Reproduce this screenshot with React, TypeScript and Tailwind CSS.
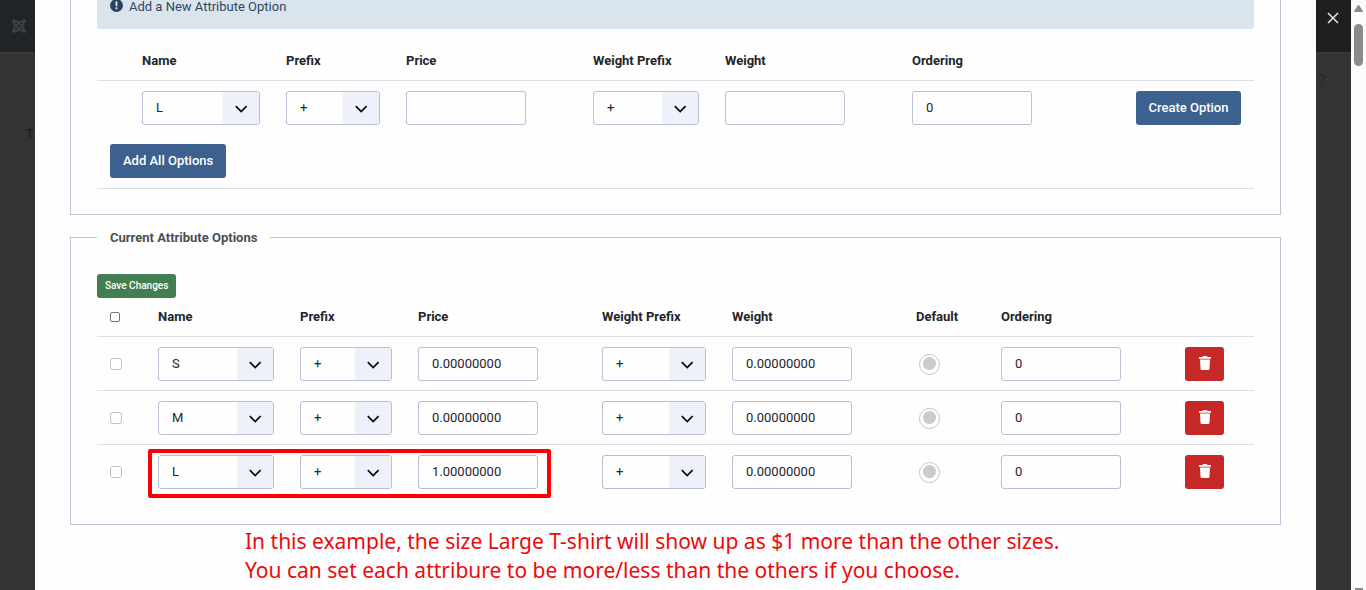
import { FaJoomla } from 'react-icons/fa';

const cell = 'px-[13px] pt-[10px] pb-[9px] text-left align-middle';
const headCell = 'px-[13px] py-[9px] text-left align-middle';
const fieldClass =
  'block h-[34px] w-[120px] rounded-[3px] border border-[#b9bfd3] bg-[#fefeff] px-[13px] pb-[2px] text-[13px] leading-5 text-[#22262a] outline-none focus:border-[#3d618f]';

function Select({ label, value, options }: { label: string; value: string; options: string[] }) {
  return (
    <div className="grid h-[34px] w-full overflow-hidden rounded-[3px] border border-[#b9bfd3] bg-[#fefeff]">
      <span className="pointer-events-none z-10 col-start-1 row-start-1 flex w-9 items-center justify-center justify-self-end bg-[#eef1fa]">
        <svg width="14" height="10" viewBox="0 0 14 10" fill="none" stroke="#0c0d10" strokeWidth="1.8" className="mt-px">
          <path d="M1.800 2.200 L7.200 7.600 L12.600 2.200" />
        </svg>
      </span>
      <select
        aria-label={label}
        defaultValue={value}
        className="col-start-1 row-start-1 w-full appearance-none bg-transparent px-[13px] text-[13px] leading-5 text-[#22262a] outline-none"
      >
        {options.map((o) => (
          <option key={o}>{o}</option>
        ))}
      </select>
    </div>
  );
}

const sizes = ['S', 'M', 'L'];
const signs = ['+', '-', '='];
const rows = [
  { size: 'S', price: '0.00000000' },
  { size: 'M', price: '0.00000000' },
  { size: 'L', price: '1.00000000' },
];

function NewOptionTable() {
  return (
    <table className="mt-3 w-full table-fixed border-collapse">
      <colgroup>
        <col className="w-[32px]" />
        <col className="w-[144px]" />
        <col className="w-[120px]" />
        <col className="w-[187px]" />
        <col className="w-[132px]" />
        <col className="w-[187px]" />
        <col className="w-[224px]" />
        <col className="w-[131px]" />
      </colgroup>
      <thead>
        <tr className="border-b border-[#dcdfe4]">
          <th className={cell}></th>
          {['Name', 'Prefix', 'Price', 'Weight Prefix', 'Weight', 'Ordering'].map((h) => (
            <th key={h} className={cell}>{h}</th>
          ))}
          <th className={cell}></th>
        </tr>
      </thead>
      <tbody>
        <tr>
          <td></td>
          <td className={cell}><Select label="Name" value="L" options={sizes} /></td>
          <td className={cell}><Select label="Prefix" value="+" options={signs} /></td>
          <td className={cell}><input aria-label="Price" className={fieldClass} /></td>
          <td className={cell}><Select label="Weight Prefix" value="+" options={signs} /></td>
          <td className={cell}><input aria-label="Weight" className={fieldClass} /></td>
          <td className={cell}><input aria-label="Ordering" defaultValue="0" className={fieldClass} /></td>
          <td className={cell}>
            <button type="button" className="block h-[34px] w-full rounded-[3px] bg-[#3d618f] font-medium whitespace-nowrap text-white">
              Create Option
            </button>
          </td>
        </tr>
        <tr className="border-b border-[#dcdfe4]">
          <td colSpan={8} className="px-[13px] py-[10px]">
            <button type="button" className="block h-[34px] rounded-[3px] bg-[#3d618f] px-[13px] font-medium whitespace-nowrap text-white">
              Add All Options
            </button>
          </td>
        </tr>
      </tbody>
    </table>
  );
}

function CurrentOptionsTable() {
  return (
    <table className="w-full table-fixed border-collapse">
      <colgroup>
        <col className="w-[48px]" />
        <col className="w-[142px]" />
        <col className="w-[118px]" />
        <col className="w-[184px]" />
        <col className="w-[130px]" />
        <col className="w-[184px]" />
        <col className="w-[85px]" />
        <col className="w-[184px]" />
        <col className="w-[82px]" />
      </colgroup>
      <thead>
        <tr className="border-b border-[#dcdfe4]">
          <th className={headCell}>
            <input
              type="checkbox"
              aria-label="Select all"
              className="block size-[10px] appearance-none rounded-[2px] border border-[#767676] bg-white checked:bg-[#3d618f]"
            />
          </th>
          {['Name', 'Prefix', 'Price', 'Weight Prefix', 'Weight', 'Default', 'Ordering'].map((h) => (
            <th key={h} className={headCell}>{h}</th>
          ))}
          <th className={headCell}></th>
        </tr>
      </thead>
      <tbody>
        {rows.map((r) => (
          <tr key={r.size} className="border-b border-[#dcdfe4] last:border-b-0">
            <td className={cell}>
              <input
                type="checkbox"
                aria-label={`Select ${r.size}`}
                className="block size-3 appearance-none rounded-[3px] border border-[#b9bfd3] bg-white checked:bg-[#3d618f]"
              />
            </td>
            <td className={`${cell} relative`}>
              <Select label="Name" value={r.size} options={sizes} />
              {r.size === 'L' && (
                <span className="pointer-events-none absolute top-1 left-[3px] z-20 h-[49px] w-[403px] rounded-[2px] border-4 border-[#fb0007]" />
              )}
            </td>
            <td className={cell}><Select label="Prefix" value="+" options={signs} /></td>
            <td className={cell}><input aria-label="Price" defaultValue={r.price} className={fieldClass} /></td>
            <td className={cell}><Select label="Weight Prefix" value="+" options={signs} /></td>
            <td className={cell}><input aria-label="Weight" defaultValue="0.00000000" className={fieldClass} /></td>
            <td className={cell}>
              <input
                type="radio"
                name="default-option"
                aria-label={`Default ${r.size}`}
                className="ml-[3px] block size-[21px] appearance-none rounded-full border border-[#c4c4c4] bg-white bg-[radial-gradient(circle_at_50%_45%,#cbcbcb_6px,transparent_7px)]"
              />
            </td>
            <td className={cell}><input aria-label="Ordering" defaultValue="0" className={fieldClass} /></td>
            <td className={cell}>
              <button
                type="button"
                aria-label={`Delete ${r.size}`}
                className="flex h-[34px] w-[39px] items-center justify-center rounded-[3px] bg-[#c52827] pb-[2px] text-white"
              >
                <svg width="12" height="14" viewBox="0 0 12 14" fill="currentColor">
                  <path d="M0 1h3.600L4.200 0h3.600l.6 1H12v1.800H0z M1 3.600h10l-.5 9.200c0 .7-.5 1.200-1.200 1.200H2.700c-.7 0-1.200-.5-1.200-1.200z" />
                </svg>
              </button>
            </td>
          </tr>
        ))}
      </tbody>
    </table>
  );
}

export default function App() {
  return (
    <div className="flex min-h-screen overflow-hidden bg-[#fefefe] font-['Roboto',sans-serif] text-[13px] leading-5 text-[#22262a]">
      <aside className="flex w-[35px] shrink-0 flex-col bg-[#333333]">
        <div className="flex h-[53px] shrink-0 items-center border-b border-[#393a3c] bg-[#202327] pl-[11px]">
          <FaJoomla size={16} className="text-[#3e4142]" />
        </div>
        <span className="mt-[71px] pl-[26px] text-[#181a1c]">T</span>
      </aside>

      <main className="min-w-0 flex-1 px-[35px]">
        <fieldset className="border border-t-0 border-[#bfc3d6] px-[26px] pb-[25px]">
          <div className="flex h-[29px] items-start gap-[6px] rounded-b-[3px] bg-[#dae4ed] pl-[13px] leading-[14px] text-[#32465f]">
            <svg width="13" height="13" viewBox="0 0 13 13" className="-mt-px">
              <circle cx="6.500" cy="6.500" r="6.500" fill="#2b4264" />
              <path d="M5.500 2.500h2l-.3 4.800h-1.400z" fill="#eef3f8" />
              <circle cx="6.500" cy="9.300" r="1" fill="#eef3f8" />
            </svg>
            <span>Add a New Attribute Option</span>
          </div>
          <NewOptionTable />
        </fieldset>

        <fieldset className="mt-[13px] border border-[#bfc3d6] px-[26px] pt-[27px] pb-[26px]">
          <legend className="px-[13px] pt-px leading-[18px] font-bold text-[#495057]">Current Attribute Options</legend>
          <button type="button" className="block h-6 rounded-[3px] bg-[#437d52] px-2 text-[10px] font-medium whitespace-nowrap text-white">
            Save Changes
          </button>
          <CurrentOptionsTable />
        </fieldset>

        <p className="mt-[2px] pl-[175px] font-['Noto_Sans',sans-serif] text-[21px] leading-[29px] whitespace-nowrap text-[#ec0a0c]">
          In this example, the size Large T-shirt will show up as $1 more than the other sizes.
          <br />
          You can set each attribure to be more/less than the others if you choose.
        </p>
      </main>

      <aside className="flex w-[35px] shrink-0 flex-col bg-[#333333]">
        <div className="flex h-[53px] shrink-0 items-start border-b border-[#3a3a3a] bg-[#1d1f20] pt-3 pl-[11px]">
          <button type="button" aria-label="Close">
            <svg width="12" height="12" viewBox="0 0 12 12" stroke="#dedede" strokeWidth="1.6">
              <path d="M1 1 L11 11 M11 1 L1 11" />
            </svg>
          </button>
        </div>
        <span className="mt-[18px] pl-[2px] text-base leading-5 text-[#282828]">?</span>
      </aside>

      <div className="flex w-[15px] shrink-0 flex-col items-center justify-between bg-[#fbfbfb] pt-[5px]">
        <div className="flex flex-col items-center gap-3">
          <svg width="9" height="7" viewBox="0 0 9 7" fill="#8b8b8b">
            <path d="M3.700 .6q.8-1 1.600 0L8.800 5.800q.4 1.200-.8 1.200H1q-1.200 0-.8-1.200z" />
          </svg>
          <div className="h-[42px] w-[9px] rounded-full bg-[#8b8b8b]" />
        </div>
        <div className="h-[2px] w-[8px] bg-[#8b8b8b]" />
      </div>
    </div>
  );
}
